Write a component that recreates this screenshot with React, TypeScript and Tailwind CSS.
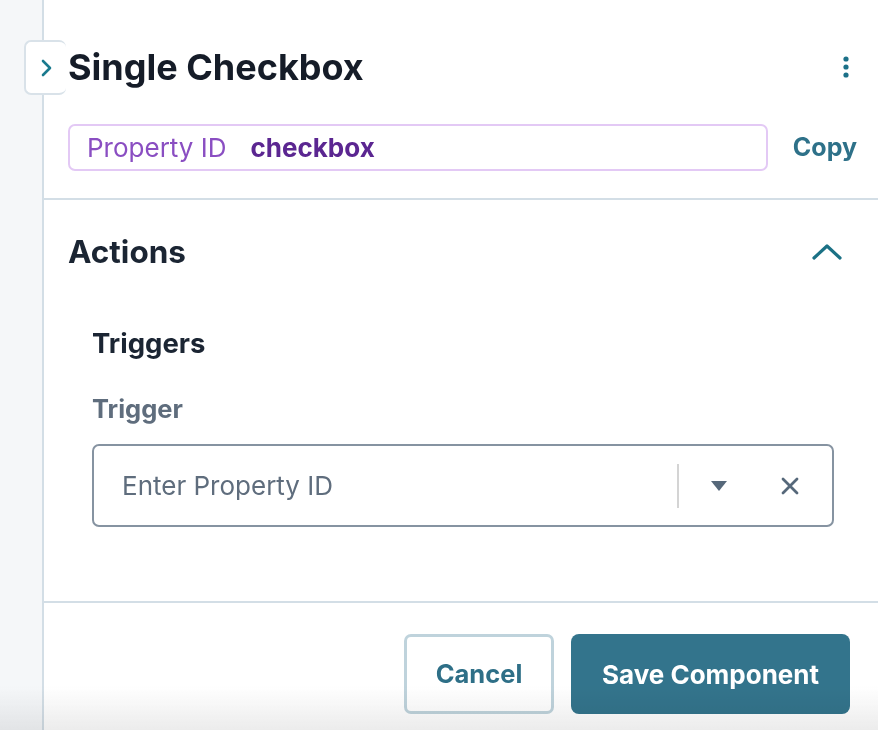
import React from "react";

export default function App() {
  return (
    <div
      className="relative flex w-[878px] h-[730px] overflow-hidden bg-white"
      style={{ fontFamily: "Inter, 'Noto Sans', sans-serif" }}
    >
      {/* left strip */}
      <div className="w-[42px] shrink-0 bg-[#f5f7f9]" />
      {/* main panel */}
      <div className="flex-1 flex flex-col border-l-2 border-[#d3dee6] bg-white">
        {/* header */}
        <div className="mt-[42px] h-[50px] flex items-center justify-between pl-[24px] pr-[28px]">
          <h1 className="text-[36px] font-bold text-[#151c28] leading-none">
            Single Checkbox
          </h1>
          <svg width="8" height="24" viewBox="0 0 8 24">
            <circle cx="4" cy="4" r="2.6" fill="#1b7088" />
            <circle cx="4" cy="12" r="2.6" fill="#1b7088" />
            <circle cx="4" cy="20" r="2.6" fill="#1b7088" />
          </svg>
        </div>
        {/* property id row */}
        <div className="mt-[32px] flex items-center pl-[24px] pr-[21px]">
          <div className="flex-1 h-[47px] flex items-center gap-[24px] px-[17px] rounded-[7px] border-2 border-[#e3c9f5]">
            <span className="text-[26px] text-[#8a4ec2]">Property ID</span>
            <span className="text-[26px] font-bold text-[#5b2691]">checkbox</span>
          </div>
          <span className="ml-[25px] text-[25px] font-bold text-[#2e7189]">Copy</span>
        </div>
        <div className="mt-[27px] border-b-2 border-[#d3dee6]" />
        {/* actions section */}
        <div className="pt-[34px] pb-[74px] border-b-2 border-[#d3dee6]">
          <div className="h-[36px] flex items-center justify-between pl-[24px] pr-[36px]">
            <h2 className="text-[31.5px] font-bold text-[#1b2533]">Actions</h2>
            <svg width="30" height="16" viewBox="0 0 30 16">
              <path d="M2 14 L15 2 L28 14" fill="none" stroke="#1b7185" strokeWidth="3.2" strokeLinecap="round" strokeLinejoin="round" />
            </svg>
          </div>
          <div className="pl-[48px] pr-[44px]">
            <div className="mt-[56px] h-[36px] flex items-center text-[27.5px] font-bold text-[#1b2533]">
              Triggers
            </div>
            <div className="mt-[31px] h-[32px] flex items-center text-[25.5px] font-bold text-[#5f6d7d]">
              Trigger
            </div>
            <div className="mt-[19px] h-[83px] flex items-center rounded-[7px] border-2 border-[#8693a1] pl-[28px]">
              <span className="flex-1 text-[26px] text-[#5f6d7d]">Enter Property ID</span>
              <div className="w-[2px] h-[44px] bg-[#d4d4d4]" />
              <div className="w-[80px] flex items-center justify-center">
                <svg width="16" height="10" viewBox="0 0 16 10">
                  <path d="M0 0 H16 L8 10 Z" fill="#56687a" />
                </svg>
              </div>
              <div className="w-[30px] mr-[27px] ml-[16px] flex items-center justify-center">
                <svg width="18" height="18" viewBox="0 0 18 18">
                  <path d="M2 2 L16 16 M16 2 L2 16" stroke="#56687a" strokeWidth="2.8" strokeLinecap="round" />
                </svg>
              </div>
            </div>
          </div>
        </div>
        {/* footer */}
        <div className="pt-[31px] flex justify-end gap-[17px] pr-[28px]">
          <button className="w-[150px] h-[80px] rounded-[7px] border-[3px] border-[#bfd3dc] bg-white text-[25.5px] font-bold text-[#2e6f87]">
            Cancel
          </button>
          <button className="w-[279px] h-[80px] rounded-[8px] bg-[#33748c] text-[26px] font-bold text-white">
            Save Component
          </button>
        </div>
      </div>
      {/* collapse tab */}
      <div className="absolute left-[24px] top-[40px] w-[42px] h-[55px] rounded-[7px] border-2 border-r-0 border-[#d9e2e9] bg-white flex items-center pl-[14px]">
        <svg width="12" height="18" viewBox="0 0 12 18">
          <path d="M3 2 L10 9 L3 16" fill="none" stroke="#1a7a8e" strokeWidth="2.6" strokeLinecap="round" strokeLinejoin="round" />
        </svg>
      </div>
      {/* bottom fade */}
      <div className="pointer-events-none absolute left-0 right-0 bottom-0 h-[44px] mix-blend-multiply bg-gradient-to-b from-[rgba(236,236,236,0)] to-[rgba(236,236,236,1)]" />
    </div>
  );
}
